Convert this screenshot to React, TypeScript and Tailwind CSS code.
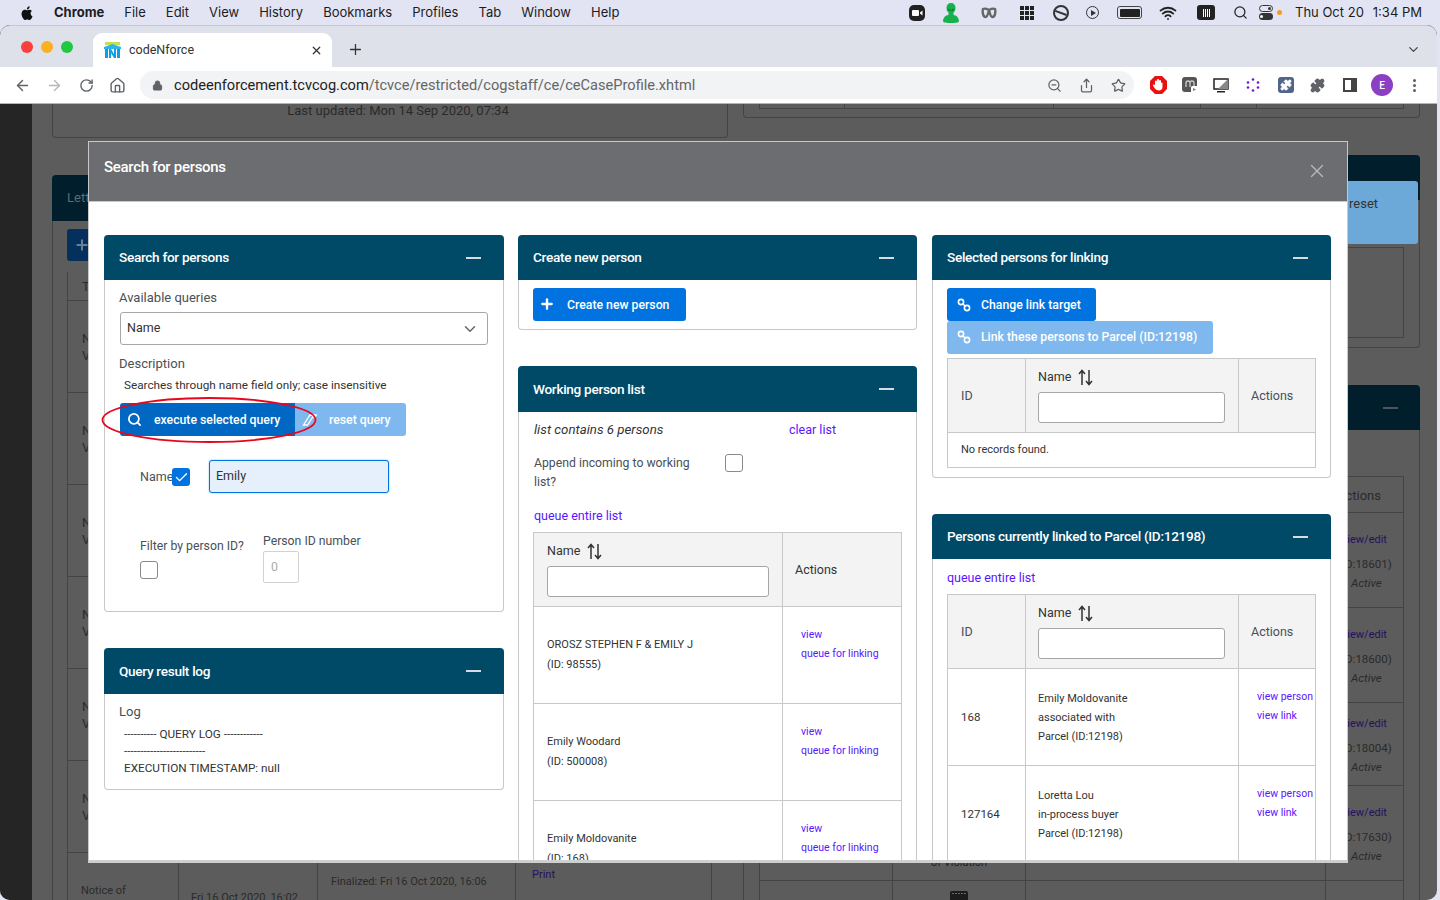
import type { ReactNode } from "react";
import {
  ArrowLeft,
  ArrowRight,
  ChevronDown,
  Home,
  Lock,
  Plus,
  Puzzle,
  RotateCw,
  Search,
  Share,
  Star,
  Wifi,
  X,
  ZoomOut,
  Check,
} from "lucide-react";

const font = "font-['Roboto',sans-serif]";

function ChainIcon() {
  return (
    <svg width="14" height="14" viewBox="0 0 14 14" fill="none" stroke="currentColor" strokeWidth="1.6">
      <circle cx="4" cy="4" r="2.6" />
      <circle cx="10" cy="10" r="2.6" />
      <path d="M6 6l2 2" />
    </svg>
  );
}

function SortIcon() {
  return (
    <svg width="15" height="17" viewBox="0 0 15 17" fill="none" stroke="#333" strokeWidth="1.5">
      <path d="M4 16V2M1 5l3-3.5L7 5" />
      <path d="M11 1v14M8 12l3 3.5 3-3.5" />
    </svg>
  );
}

function EraserIcon() {
  return (
    <svg width="16" height="12" viewBox="0 0 16 12" className="mr-[5px]">
      <path d="M8 1h4L5.5 11H1.5z" fill="none" stroke="#fff" strokeWidth="1.3" />
      <path d="M9 .5h6.5L12.5 5z" fill="#fff" />
    </svg>
  );
}

function Panel({
  title,
  children,
  className = "",
  headerHeight = "h-[45px]",
}: {
  title: string;
  children: ReactNode;
  className?: string;
  headerHeight?: string;
}) {
  return (
    <section className={className}>
      <header
        className={`flex items-center justify-between rounded-t bg-[#004a68] pl-[15px] pr-[23px] text-[13.6px] font-medium tracking-[-0.3px] text-white ${headerHeight}`}
      >
        <span>{title}</span>
        <span className="h-[2px] w-[15px] bg-[#d4dde2]" />
      </header>
      <div className="rounded-b border border-t-0 border-[#c8c8c8] bg-white">{children}</div>
    </section>
  );
}

function BlueButton({ icon, label, className = "" }: { icon: ReactNode; label: string; className?: string }) {
  return (
    <button className={`flex h-[33px] items-center rounded-[3px] text-[12.25px] font-medium text-white ${className}`}>
      <span className="flex w-[34px] justify-center">{icon}</span>
      <span className="pt-[1px]">{label}</span>
    </button>
  );
}

function NameHead() {
  return (
    <>
      <div className="flex items-center gap-[7px] text-[12.5px] text-[#333]">
        Name <SortIcon />
      </div>
      <div className="mt-[6px] h-[31px] rounded-[3px] border border-[#a6a6a6] bg-white" />
    </>
  );
}

function Lnk({ children, className = "" }: { children: ReactNode; className?: string }) {
  return <a className={`block text-[#5a16ff] ${className}`}>{children}</a>;
}

function MenuBar() {
  return (
    <div className={`flex h-[25px] items-center justify-between pl-[20px] pr-[18px] text-[13px] text-[#1c1c1e] ${"font-['Inter',sans-serif]"}`}>
      <div className="flex items-center gap-[20px]">
        <svg width="14" height="16" viewBox="0 0 14 16" fill="#111">
          <path d="M10.6 8.4c0-1.6 1.3-2.4 1.4-2.4-.8-1.1-2-1.3-2.4-1.3-1-.1-2 .6-2.5.6s-1.3-.6-2.2-.6C3.8 4.7 2.7 5.4 2.1 6.4c-1.2 2-.3 5.1.9 6.8.6.8 1.2 1.8 2.1 1.7.9 0 1.2-.5 2.2-.5s1.3.5 2.2.5 1.5-.8 2.1-1.7c.7-1 .9-1.9 1-2-.1 0-1.9-.7-2-2.8zM8.9 3.4c.5-.6.8-1.4.7-2.2-.7 0-1.5.5-2 1.1-.4.5-.8 1.3-.7 2.1.8 0 1.5-.4 2-1z" />
        </svg>
        <span className="font-bold">Chrome</span>
        <span>File</span>
        <span>Edit</span>
        <span>View</span>
        <span>History</span>
        <span>Bookmarks</span>
        <span>Profiles</span>
        <span>Tab</span>
        <span>Window</span>
        <span>Help</span>
      </div>
      <div className="flex items-center">
        <svg width="16" height="16" viewBox="0 0 16 16">
          <rect width="16" height="16" rx="5" fill="#222" />
          <rect x="3" y="5" width="7" height="6" rx="1" fill="#fff" />
          <path d="M11 7.5l2.5-2v5l-2.5-2z" fill="#fff" />
        </svg>
        <svg width="18" height="20" viewBox="0 0 18 20" className="ml-[17px]" fill="#16b04c">
          <path d="M9 0c3 0 4.5 2 4.5 5 0 2-.8 3.500-2 4.500V12c3 .5 5 2 5.500 6 0 1-1 2-8 2s-8-1-8-2c.5-4 2.500-5.500 5.500-6V9.500c-1.200-1-2-2.500-2-4.500C4.500 2 6 0 9 0z" />
          <path d="M6 5.5l3 1.5 3-1.5-.5 2H6.5z" fill="#0a6f30" />
        </svg>
        <svg width="16" height="12" viewBox="0 0 16 12" className="ml-[21px]" fill="none" stroke="#666" strokeWidth="2.4">
          <path d="M2 2c-1 4 .5 8 2.5 8S7 7 8 3c1 4 1.5 7 3.5 7S15 6 14 2c-2-1-4 0-6 1-2-1-4-2-6-1z" />
        </svg>
        <span className="ml-[23px] grid h-[14px] w-[14px] grid-cols-3 gap-[1px]">
          {Array.from({ length: 9 }).map((_, i) => (
            <span key={i} className="bg-[#222]" />
          ))}
        </span>
        <span className="ml-[19px] flex h-[16px] w-[16px] items-center justify-center rounded-full border-2 border-[#333]">
          <span className="h-[1.5px] w-[12px] rotate-[20deg] bg-[#333]" />
        </span>
        <span className="ml-[17px] flex h-[13px] w-[13px] items-center justify-center rounded-full border border-[#333]">
          <span className="ml-[1px] border-y-[3px] border-l-[5px] border-y-transparent border-l-[#333]" />
        </span>
        <span className="ml-[18px] flex h-[13px] w-[25px] items-center rounded-[3px] border border-[#444] p-[1.5px]">
          <span className="h-full w-full rounded-[1px] bg-[#222]" />
        </span>
        <Wifi size={18} strokeWidth={2.4} className="ml-[17px] text-[#222]" />
        <span className="ml-[20px] flex h-[15px] w-[18px] items-center justify-center gap-[1px] rounded-[3px] bg-[#222]">
          {[0, 1, 2, 3].map((i) => (
            <span key={i} className="h-[8px] w-[1px] bg-white" />
          ))}
        </span>
        <Search size={15} strokeWidth={2} className="ml-[18px] text-[#222]" />
        <span className="ml-[11px] flex flex-col gap-[1px]">
          <span className="flex h-[7px] w-[14px] items-center justify-end rounded-full border border-[#333] pr-[1px]">
            <span className="h-[3px] w-[3px] rounded-full bg-[#333]" />
          </span>
          <span className="flex h-[7px] w-[14px] items-center rounded-full bg-[#333] pl-[1px]">
            <span className="h-[3px] w-[3px] rounded-full bg-white" />
          </span>
        </span>
        <span className="ml-[4px] h-[5px] w-[5px] rounded-full bg-[#f59a23]" />
        <span className="ml-[13px]">Thu Oct 20</span>
        <span className="ml-[9px]">1:34 PM</span>
      </div>
    </div>
  );
}

function TabStrip() {
  return (
    <div className="flex h-[42px] items-end rounded-t-[10px] border-t border-[#c6c7d0] bg-[#dee1e9] pl-[21px] pr-[16px]">
      <div className="mb-[14px] flex gap-[8px] self-end">
        <span className="h-[12px] w-[12px] rounded-full bg-[#f9403c]" />
        <span className="h-[12px] w-[12px] rounded-full bg-[#fbb021]" />
        <span className="h-[12px] w-[12px] rounded-full bg-[#1fc83f]" />
      </div>
      <div className="ml-[20px] flex h-[34px] w-[239px] items-center rounded-t-[9px] bg-white pl-[11px] pr-[9px] text-[12.5px] text-[#333]">
        <svg width="17" height="16" viewBox="0 0 17 16">
          <rect x="1" y="0" width="15" height="3" fill="#c5e04a" />
          <path d="M0 5l8.5-3 8.5 3v2H0z" fill="#2eb4e8" />
          <rect x="1" y="7" width="3" height="9" fill="#0f9fe0" />
          <rect x="13" y="7" width="3" height="9" fill="#0f9fe0" />
          <path d="M5 16V7h2l3 5V7h2v9h-2l-3-5v5z" fill="#0f9fe0" />
        </svg>
        <span className="ml-[8px] flex-1">codeNforce</span>
        <X size={13} strokeWidth={2.2} className="text-[#333]" />
      </div>
      <Plus size={17} strokeWidth={1.8} className="mb-[9px] ml-[15px] text-[#333]" />
      <ChevronDown size={15} strokeWidth={2} className="mb-[10px] ml-auto text-[#444]" />
    </div>
  );
}

function Toolbar() {
  return (
    <div className="flex h-[37px] items-center border-b border-[#b5b5b5] bg-white pl-[14px] text-[#5f6368]">
      <ArrowLeft size={17} strokeWidth={2} />
      <ArrowRight size={17} strokeWidth={2} className="ml-[15px] text-[#b4b6ba]" />
      <RotateCw size={15} strokeWidth={2.2} className="ml-[16px]" />
      <Home size={17} strokeWidth={2} className="ml-[15px]" />
      <div className="ml-[14px] flex h-[28px] w-[994px] items-center rounded-full bg-[#f1f3f4] pl-[12px] pr-[8px] pt-[1px] text-[14.6px]">
        <Lock size={11} fill="#5f6368" />
        <span className="ml-[11px] text-[#222]">codeenforcement.tcvcog.com</span>
        <span className="text-[#666]">/tcvce/restricted/cogstaff/ce/ceCaseProfile.xhtml</span>
        <ZoomOut size={15} className="ml-auto" />
        <Share size={15} className="ml-[17px]" />
        <Star size={15} className="ml-[17px]" />
      </div>
      <svg width="17" height="18" viewBox="0 0 17 18" className="ml-[16px]">
        <path d="M5 0h7l5 5v8l-5 5H5l-5-5V5z" fill="#ec0f0f" />
        <path d="M5 8V5.5a1 1 0 012 0V4a1 1 0 012 0v1a1 1 0 012 0v2a.8.8 0 011.5 0v4c0 2-1.5 3.5-3.5 3.5S5.5 13.5 4.5 12L3 9.5c-.4-1 1-1.5 2-.5z" fill="#fff" />
      </svg>
      <svg width="16" height="16" viewBox="0 0 16 16" className="ml-[15px]">
        <rect width="15" height="15" rx="3" fill="#555" />
        <path d="M4 10V6a2 2 0 014 0v4M8 6a2 2 0 014 0v4" fill="none" stroke="#ccc" strokeWidth="1.3" />
        <rect x="9" y="9" width="7" height="7" rx="1.5" fill="#fff" />
        <path d="M11 11v3l3-1.5z" fill="#777" />
      </svg>
      <svg width="16" height="15" viewBox="0 0 16 15" className="ml-[15px]">
        <rect x="1" y="1" width="14" height="10" fill="#fff" stroke="#222" strokeWidth="1.5" />
        <path d="M15 1v10H5z" fill="#888" />
        <rect x="4" y="13" width="8" height="1.5" fill="#222" />
      </svg>
      <svg width="14" height="14" viewBox="0 0 14 14" className="ml-[17px]" fill="#6a18d8">
        <circle cx="7" cy="1.5" r="1.3" />
        <circle cx="12" cy="4.5" r="1.3" />
        <circle cx="12" cy="9.5" r="1.3" />
        <circle cx="7" cy="12.5" r="1.3" />
        <circle cx="2" cy="9.5" r="1.3" />
        <circle cx="2" cy="4.5" r="1.3" />
      </svg>
      <span className="ml-[18px] flex h-[16px] w-[16px] items-center justify-center rounded-[3px] bg-[#51648c]">
        <Puzzle size={12} fill="#fff" className="text-white" />
      </span>
      <Puzzle size={15} fill="#5f6368" className="ml-[16px]" />
      <span className="ml-[18px] flex h-[14px] w-[14px] justify-end border-2 border-[#444]">
        <span className="h-full w-[4px] bg-[#444]" />
      </span>
      <span className="ml-[14px] flex h-[22px] w-[22px] items-center justify-center rounded-full bg-[#8a3fc4] text-[10px] font-medium text-white">
        E
      </span>
      <span className="ml-[20px] flex flex-col gap-[2px]">
        <span className="h-[3px] w-[3px] rounded-full bg-[#5f6368]" />
        <span className="h-[3px] w-[3px] rounded-full bg-[#5f6368]" />
        <span className="h-[3px] w-[3px] rounded-full bg-[#5f6368]" />
      </span>
    </div>
  );
}

// dimmed page that sits behind the dialog
function LeftBackdrop() {
  const rows = [301, 393, 485, 577, 669, 761];
  return (
    <div className="w-[676px]">
      <div className="h-[34px] rounded-b border border-t-0 border-[#444] pl-[16px] text-center text-[13px] leading-[14px] text-[#2a2a2a]">
        Last updated: Mon 14 Sep 2020, 07:34
      </div>
      <div className="mt-[37px] flex h-[46px] items-center rounded-t bg-[#011e2c] pl-[15px] text-[13px] text-[#5f6b72]">Lett</div>
      <div className="border-l border-[#444] pl-[14px] pt-[8px]">
        <div className="h-[32px] w-[32px] rounded-[3px] bg-[#03305c] pl-[7px] pt-[8px] text-[#6a7f95]">
          <Plus size={16} strokeWidth={3} />
        </div>
        <div className="mt-[11px] border-l border-[#444] text-[13px] text-[#2a2a2a]">
          <div className="h-[29px] border-b border-[#444] pl-[14px] pt-[5px]">T</div>
          {rows.map((r) => (
            <div key={r} className="h-[92px] border-b border-[#444] pl-[14px] pt-[29px] leading-[17px]">
              N
              <br />V
            </div>
          ))}
          <div className="grid h-[60px] w-[646px] grid-cols-[110px_139px_198px_197px] text-[11px]">
            <div className="pl-[13px] pt-[30px]">Notice of</div>
            <div className="border-l border-[#444] pl-[12px] pt-[37px]">Fri 16 Oct 2020, 16:02</div>
            <div className="border-l border-[#444] pl-[13px] pt-[21px]">Finalized: Fri 16 Oct 2020, 16:06</div>
            <div className="border-x border-[#444] pl-[16px] pt-[14px] text-[#25105f]">Print</div>
          </div>
        </div>
      </div>
    </div>
  );
}

function RightBackdrop() {
  const tail = [
    { h: 95, id: "(ID:18601)" },
    { h: 95, id: "(ID:18600)" },
    { h: 83, id: "(ID:18004)" },
    { h: 95, id: "(ID:17630)" },
  ];
  const line = "border-r border-[#444]";
  return (
    <div className="ml-[15px] w-[677px]">
      <div className="h-[14px] rounded-b border border-t-0 border-[#444] px-[15px]">
        <div className="grid h-[5px] grid-cols-[85px_209px_147px_56px_1fr] border border-t-0 border-[#444]">
          <div className={line} />
          <div className={line} />
          <div className={line} />
          <div className={line} />
        </div>
      </div>
      <div className="mt-[37px] h-[45px] rounded-t bg-[#011e2c]" />
      <div className="h-[148px] rounded-b border border-t-0 border-[#444] px-[15px] pt-[47px]">
        <div className="h-[91px] border border-[#444]" />
      </div>
      <div className="mt-[37px] flex h-[45px] items-center justify-end rounded-t bg-[#011e2c] pr-[22px]">
        <span className="h-[2px] w-[15px] bg-[#4a555c]" />
      </div>
      <div className="border-x border-[#444] pl-[15px] pr-[15px] pt-[46px]">
        <div className="border-x border-t border-[#444] text-[11.5px] text-[#2a2a2a]">
          <div className="h-[36px] border-b border-[#444] pl-[577px] pt-[9px] text-[13px]">Actions</div>
          {tail.map((t) => (
            <div key={t.id} style={{ height: t.h }} className="grid grid-cols-[133px_133px_300px_1fr] border-b border-[#444]">
              <div className={line} />
              <div className={`${line} flex items-end justify-center pb-[9px] text-[11px] text-[#222]`}>
                {t.id === "(ID:17630)" ? "of Violation" : ""}
              </div>
              <div className={line} />
              <div className="flex flex-col justify-center pl-[12px] pt-[3px] leading-[16px]">
                <div className="pl-[4px] text-[11px] text-[#25105f]">view/edit</div>
                <div className="mt-[8px]">{t.id}</div>
                <div className="mt-[3px] pl-[13px] italic">Active</div>
              </div>
            </div>
          ))}
          <div className="grid h-[20px] grid-cols-[133px_133px_300px_1fr]">
            <div className={line} />
            <div className={`${line} flex justify-center pt-[10px]`}>
              <span className="grid h-[10px] w-[18px] grid-cols-5 content-start gap-[1px] rounded-t-[2px] bg-[#1c1c1c] p-[2px]">
                {[0, 1, 2, 3, 4].map((i) => (
                  <span key={i} className="h-[1px] bg-[#666]" />
                ))}
              </span>
            </div>
            <div className={line} />
          </div>
        </div>
      </div>
    </div>
  );
}

function SearchPanel() {
  return (
    <Panel title="Search for persons">
      <div className="relative h-[331px] px-[15px] pt-[10px] text-[13px] text-[#495057]">
        <div className="ml-[-1px] leading-[16px]">Available queries</div>
        <div className="mt-[6px] flex h-[33px] items-center justify-between rounded-[3px] border border-[#a6a6a6] pl-[6px] pr-[8px] text-[12.5px] text-[#333]">
          Name <ChevronDown size={18} className="text-[#666]" />
        </div>
        <div className="ml-[-1px] mt-[11px] leading-[16px]">Description</div>
        <div className="ml-[4px] mt-[5px] text-[11.75px] leading-[16px] text-[#333]">Searches through name field only; case insensitive</div>
        <div className="mt-[10px] flex">
          <BlueButton
            icon={<Search size={15} strokeWidth={2.8} className="mr-[5px]" />}
            label="execute selected query"
            className="w-[175px] rounded-r-none bg-[#0068c2]"
          />
          <BlueButton icon={<EraserIcon />} label="reset query" className="w-[111px] rounded-l-none bg-[#7fb8ee]" />
        </div>
        <div className="mt-[24px] flex items-start pl-[20px]">
          <span className="mt-[9px] w-[32px] text-[12.5px] leading-[16px]">Name</span>
          <span className="mt-[8px] flex h-[18px] w-[18px] items-center justify-center rounded-[3px] bg-[#0073e0] text-white">
            <Check size={15} strokeWidth={2.2} />
          </span>
          <div className="ml-[19px] flex h-[33px] w-[180px] items-center rounded-[3px] border border-[#0073e0] bg-[#e6f0fd] pl-[6px] text-[12.5px] text-[#333] shadow-[0_0_2px_#7fb8ee]">
            Emily
          </div>
        </div>
        <div className="mt-[40px] flex pl-[20px] text-[12.25px]">
          <div className="w-[123px] pt-[5px]">
            <div className="leading-[16px]">Filter by person ID?</div>
            <div className="mt-[7px] h-[18px] w-[18px] rounded-[3px] border border-[#8a8a8a]" />
          </div>
          <div>
            <div className="leading-[16px]">Person ID number</div>
            <div className="mt-[2px] flex h-[32px] w-[36px] items-center rounded-[2px] border border-[#d2d2d2] pl-[7px] text-[#aaa]">0</div>
          </div>
        </div>
      </div>
    </Panel>
  );
}

function LogPanel() {
  return (
    <Panel title="Query result log" className="mt-[36px]" headerHeight="h-[46px]">
      <div className="h-[95px] px-[14px] pt-[9px] text-[11.75px] text-[#333]">
        <div className="text-[13px] leading-[17px] text-[#495057]">Log</div>
        <div className="ml-[5px] mt-[6px] leading-[17px]">
          ---------- QUERY LOG ------------
          <br />
          -------------------------
          <br />
          EXECUTION TIMESTAMP: null
        </div>
      </div>
    </Panel>
  );
}

function WorkingList() {
  const people = [
    { name: "OROSZ STEPHEN F & EMILY J", id: "(ID: 98555)" },
    { name: "Emily Woodard", id: "(ID: 500008)" },
    { name: "Emily Moldovanite", id: "(ID: 168)" },
  ];
  return (
    <Panel title="Working person list" className="mt-[36px]" headerHeight="h-[46px]">
      <div className="px-[15px] pt-[9px] text-[13px] text-[#495057]">
        <div className="flex leading-[18px]">
          <span className="w-[255px] text-[13.25px] italic text-[#333]">list contains 6 persons</span>
          <Lnk className="text-[12.5px]">clear list</Lnk>
        </div>
        <div className="mt-[15px] flex items-start">
          <div className="w-[191px] pr-[20px] text-[12.25px] leading-[19px]">Append incoming to working list?</div>
          <span className="h-[18px] w-[18px] rounded-[3px] border border-[#8a8a8a]" />
        </div>
        <Lnk className="mt-[16px] text-[12.5px] leading-[16px]">queue entire list</Lnk>
        <table className="ml-[-1px] mt-[8px] w-[369px] table-fixed border-collapse text-[11px] text-[#333]">
          <colgroup>
            <col className="w-[249px]" />
            <col />
          </colgroup>
          <thead>
            <tr className="h-[74px] bg-[#f3f3f3]">
              <th className="border border-[#c8c8c8] px-[13px] text-left font-normal">
                <NameHead />
              </th>
              <th className="border border-[#c8c8c8] pl-[12px] pt-[1px] text-left text-[12.5px] font-normal">Actions</th>
            </tr>
          </thead>
          <tbody>
            {people.map((p) => (
              <tr key={p.id} className="h-[97px]">
                <td className="border border-[#c8c8c8] px-[13px] leading-[20px]">
                  {p.name}
                  <br />
                  {p.id}
                </td>
                <td className="border border-[#c8c8c8] pb-[23px] pl-[18px] leading-[19px]">
                  <Lnk className="text-[10.5px]">view</Lnk>
                  <Lnk className="text-[10.5px]">queue for linking</Lnk>
                </td>
              </tr>
            ))}
          </tbody>
        </table>
      </div>
    </Panel>
  );
}

function SelectedPanel() {
  return (
    <Panel title="Selected persons for linking">
      <div className="h-[197px] px-[14px] pt-[8px]">
        <BlueButton icon={<ChainIcon />} label="Change link target" className="w-[149px] bg-[#0073e0]" />
        <BlueButton icon={<ChainIcon />} label="Link these persons to Parcel (ID:12198)" className="h-[32px] w-[266px] bg-[#7fb8ee] pb-[2px]" />
        <table className="mt-[4px] w-[369px] table-fixed border-collapse text-[12px] text-[#333]">
          <colgroup>
            <col className="w-[78px]" />
            <col className="w-[213px]" />
            <col />
          </colgroup>
          <thead>
            <tr className="h-[74px] bg-[#f3f3f3] text-[12.5px] text-[#495057]">
              <th className="border border-[#c8c8c8] pl-[13px] pt-[1px] text-left font-normal">ID</th>
              <th className="border border-[#c8c8c8] pl-[12px] pr-[13px] text-left font-normal">
                <NameHead />
              </th>
              <th className="border border-[#c8c8c8] pl-[12px] pt-[1px] text-left font-normal">Actions</th>
            </tr>
          </thead>
          <tbody>
            <tr className="h-[35px]">
              <td colSpan={3} className="border border-[#c8c8c8] pl-[13px] text-[11px]">
                No records found.
              </td>
            </tr>
          </tbody>
        </table>
      </div>
    </Panel>
  );
}

function LinkedPanel() {
  const links = [
    { id: "168", lines: ["Emily Moldovanite", "associated with", "Parcel (ID:12198)"] },
    { id: "127164", lines: ["Loretta Lou", "in-process buyer", "Parcel (ID:12198)"] },
  ];
  return (
    <Panel title="Persons currently linked to Parcel (ID:12198)" className="mt-[36px]">
      <div className="px-[14px] pt-[11px]">
        <Lnk className="text-[12.5px] leading-[16px]">queue entire list</Lnk>
        <table className="mt-[8px] w-[369px] table-fixed border-collapse text-[11px] text-[#333]">
          <colgroup>
            <col className="w-[78px]" />
            <col className="w-[213px]" />
            <col />
          </colgroup>
          <thead>
            <tr className="h-[74px] bg-[#f3f3f3] text-[12.5px] text-[#495057]">
              <th className="border border-[#c8c8c8] pl-[13px] pt-[1px] text-left font-normal">ID</th>
              <th className="border border-[#c8c8c8] pl-[12px] pr-[13px] text-left font-normal">
                <NameHead />
              </th>
              <th className="border border-[#c8c8c8] pl-[12px] pt-[1px] text-left font-normal">Actions</th>
            </tr>
          </thead>
          <tbody>
            {links.map((l) => (
              <tr key={l.id} className="h-[97px]">
                <td className="border border-[#c8c8c8] pl-[13px] pt-[2px] text-[11.5px]">{l.id}</td>
                <td className="border border-[#c8c8c8] pl-[12px] leading-[19px]">
                  {l.lines.map((t) => (
                    <div key={t}>{t}</div>
                  ))}
                </td>
                <td className="border border-[#c8c8c8] pb-[23px] pl-[18px] leading-[19px]">
                  <Lnk className="whitespace-nowrap text-[10.5px]">view person</Lnk>
                  <Lnk className="text-[10.5px]">view link</Lnk>
                </td>
              </tr>
            ))}
          </tbody>
        </table>
      </div>
    </Panel>
  );
}

export default function App() {
  return (
    <div className={`h-[900px] w-[1440px] overflow-hidden bg-[#e2e4f3] ${font}`}>
      <MenuBar />
      <div className="h-[875px] w-[1437px] overflow-hidden rounded-[10px] bg-[#5c5c5c]">
        <TabStrip />
        <Toolbar />
        <div className="relative h-[796px] overflow-hidden">
          <div className="flex">
            <div className="w-[32px] shrink-0 bg-[#252525]" />
            <div className="flex pl-[20px]">
              <LeftBackdrop />
              <RightBackdrop />
            </div>
          </div>

          {/* light button of the page that stays above the dimming */}
          <div className="absolute left-[1340px] top-[77px] h-[63px] w-[78px] rounded-[3px] bg-[#6ca9d9] pl-[9px] pt-[13px] text-[13px] text-[#333]">
            reset
          </div>

          {/* dialog */}
          <div className="absolute left-[88px] top-[37px] flex h-[722px] w-[1260px] flex-col overflow-hidden border border-b-[3px] border-[#c8c8c8] border-b-[#cfcfcf] bg-white">
            <div className="flex h-[60px] shrink-0 items-center justify-between border-b border-[#c8c8c8] bg-[#6c6d70] pb-[8px] pl-[15px] pr-[19px] text-[15px] font-medium tracking-[-0.3px] text-white">
              <span>Search for persons</span>
              <X size={22} strokeWidth={1.4} className="mt-[6px] text-[#b9babc]" />
            </div>
            <div className="grid grid-cols-[400px_399px_399px] pl-[15px] pt-[33px]">
              <div>
                <SearchPanel />
                <LogPanel />
              </div>
              <div className="ml-[14px] w-[399px]">
                <Panel title="Create new person">
                  <div className="h-[49px] px-[14px] pt-[8px]">
                    <BlueButton
                      icon={<Plus size={16} strokeWidth={3.5} className="mb-[2px] mr-[7px]" />}
                      label="Create new person"
                      className="w-[153px] bg-[#0073e0]"
                    />
                  </div>
                </Panel>
                <WorkingList />
              </div>
              <div className="ml-[29px] w-[399px]">
                <SelectedPanel />
                <LinkedPanel />
              </div>
            </div>
          </div>

          {/* red annotation around the run button */}
          <svg width="218" height="48" viewBox="0 0 218 48" className="absolute left-[100px] top-[292px]" fill="none">
            <ellipse cx="109" cy="24" rx="106.5" ry="22" stroke="#e8061d" strokeWidth="1.8" />
          </svg>
        </div>
      </div>
    </div>
  );
}
